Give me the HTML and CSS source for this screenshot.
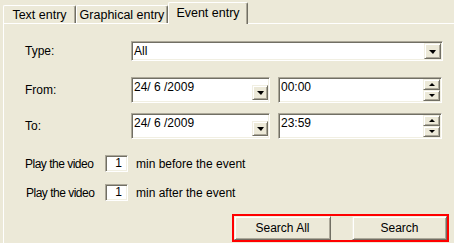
FILE: index.html
```html
<!DOCTYPE html>
<html>
<head>
<meta charset="utf-8">
<link rel="stylesheet" href="styles.css">
</head>
<body>
<div class="tabs">
  <div class="tab t1">Text entry</div>
  <div class="tab t2">Graphical entry</div>
  <div class="tab t3 active">Event entry</div>
</div>
<div class="panel">
  <div class="row type-row">
    <span class="label">Type:</span>
    <div class="sunk combo">
      <span class="val">All</span>
      <span class="raised dd"><i class="tri down"></i></span>
    </div>
  </div>
  <div class="row dt-row">
    <span class="label">From:</span>
    <div class="sunk date">
      <span class="val">24/ 6 /2009</span>
      <span class="raised dd small"><i class="tri down"></i></span>
    </div>
    <div class="sunk time">
      <span class="val">00:00</span>
      <span class="spin">
        <span class="raised sb"><i class="tri up"></i></span>
        <span class="raised sb"><i class="tri down"></i></span>
      </span>
    </div>
  </div>
  <div class="row dt-row to">
    <span class="label">To:</span>
    <div class="sunk date">
      <span class="val">24/ 6 /2009</span>
      <span class="raised dd small"><i class="tri down"></i></span>
    </div>
    <div class="sunk time">
      <span class="val">23:59</span>
      <span class="spin">
        <span class="raised sb"><i class="tri up"></i></span>
        <span class="raised sb"><i class="tri down"></i></span>
      </span>
    </div>
  </div>
  <div class="row play-row">
    <span class="plabel">Play the video</span>
    <span class="sunk num">1</span>
    <span class="after">min before the event</span>
  </div>
  <div class="row play-row second">
    <span class="plabel">Play the video</span>
    <span class="sunk num">1</span>
    <span class="after">min after the event</span>
  </div>
  <div class="actions">
    <div class="highlight">
      <button class="raised btn b1">Search All</button>
      <button class="raised btn b2">Search</button>
    </div>
  </div>
</div>
</body>
</html>
```
FILE: styles.css
```css
html, body {
  margin: 0;
  padding: 0;
  background: #ECE9D8;
  font-family: "Liberation Sans", Arial, sans-serif;
  font-size: 12px;
  color: #000;
  overflow: hidden;
}
.tabs {
  display: flex;
  align-items: flex-end;
  height: 23px;
  padding-left: 3px;
}
.tab {
  box-sizing: border-box;
  height: 18px;
  border-top: 1px solid #fff;
  border-left: 1px solid #fff;
  border-right: 1px solid #716F64;
  box-shadow: inset -1px 0 0 #ACA899;
  border-radius: 2px 2px 0 0;
  background: #ECE9D8;
  display: flex;
  align-items: center;
  justify-content: center;
  padding-top: 1px;
  font-size: 12.5px;
}
.t1 { width: 73px; }
.t2 { width: 92px; }
.t3 { width: 80px; }
.tab.active {
  height: 22px;
  position: relative;
  z-index: 1;
  margin-bottom: -1px;
  padding-bottom: 3px;
}
.panel {
  box-sizing: border-box;
  margin-left: 3px;
  border-top: 1px solid #fff;
  border-left: 1px solid #fff;
  padding: 17px 0 0 21px;
  height: 220px;
}
.row {
  display: flex;
  align-items: center;
}
.label { width: 106px; }
.sunk {
  box-sizing: border-box;
  background: #fff;
  border: 1px solid;
  border-color: #ACA899 #fff #fff #ACA899;
  box-shadow: inset 1px 1px 0 #716F64, inset -1px -1px 0 #F1EFE2;
  padding: 1px;
  display: flex;
}
.raised {
  box-sizing: border-box;
  background: #ECE9D8;
  border: 1px solid;
  border-color: #F1EFE2 #716F64 #716F64 #F1EFE2;
  box-shadow: inset 1px 1px 0 #fff, inset -1px -1px 0 #ACA899;
  display: flex;
  align-items: center;
  justify-content: center;
}
.val {
  flex: 1;
  padding-left: 1px;
  line-height: 14px;
}
.type-row { height: 20px; }
.combo {
  width: 312px;
  height: 20px;
  align-items: center;
}
.dd {
  width: 17px;
  height: 16px;
}
.dd.small {
  width: 16px;
  height: 15px;
  align-self: flex-end;
  margin-bottom: 1px;
}
.tri {
  display: block;
  width: 0;
  height: 0;
  border-left: 3px solid transparent;
  border-right: 3px solid transparent;
}
.tri.down { border-top: 3px solid #000; }
.tri.up { border-bottom: 3px solid #000; }
.dd .tri {
  border-left-width: 4px;
  border-right-width: 3px;
  border-top-width: 4px;
  margin-top: 1px;
}
.dt-row {
  margin-top: 16px;
  height: 26px;
}
.dt-row.to { margin-top: 10px; }
.date {
  width: 139px;
  height: 26px;
  align-items: flex-start;
  padding-top: 2px;
}
.time {
  width: 164px;
  height: 26px;
  margin-left: 8px;
  align-items: stretch;
}
.time .val { padding-top: 1px; }
.spin {
  display: flex;
  flex-direction: column;
  width: 17px;
}
.sb { height: 11px; }
.play-row {
  margin-top: 16px;
  height: 17px;
}
.play-row.second {
  margin-top: 12px;
  padding-left: 1px;
}
.plabel {
  width: 80px;
  letter-spacing: -0.5px;
}
.second .plabel { width: 79px; }
.num {
  width: 23px;
  height: 17px;
  justify-content: flex-end;
  align-items: center;
  padding-right: 5px;
  line-height: 13px;
}
.after { margin-left: 8px; }
.actions {
  display: flex;
  justify-content: flex-end;
  width: 424px;
  margin-top: 13px;
}
.highlight {
  display: flex;
  gap: 21px;
  border: 2px solid #FF0000;
}
.btn {
  height: 24px;
  font-family: inherit;
  font-size: 12px;
  color: #000;
  padding: 0;
  margin: 0;
}
.b1 { width: 97px; }
.b2 { width: 95px; }
```
